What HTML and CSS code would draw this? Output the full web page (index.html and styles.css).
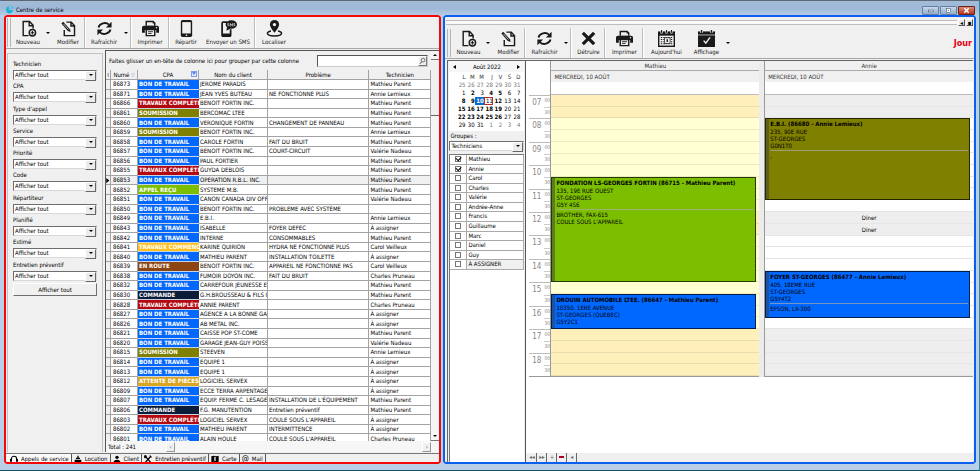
FILE: index.html
```html
<!DOCTYPE html>
<html lang="fr">
<head>
<meta charset="utf-8">
<title>Centre de service</title>
<link rel="stylesheet" href="styles.css">
</head>
<body>
<svg class="sprite" aria-hidden="true">
  <symbol id="i-new" viewBox="0 0 24 24"><path d="M12 22H4.500V2h9l5 5.500V12M13 2v6h5.500" fill="none" stroke="currentColor" stroke-width="2"/><circle cx="17.500" cy="18" r="4.500" fill="none" stroke="currentColor" stroke-width="2"/><path d="M17.500 15.500v5M15 18h5" stroke="currentColor" stroke-width="1.600"/></symbol>
  <symbol id="i-edit" viewBox="0 0 24 24"><path d="M9 3h7l4.500 5v14H6v-8M15.500 3v5.500h5" fill="none" stroke="currentColor" stroke-width="2"/><path d="M2 5l2.500-2.500L14 13l1 4-4-1.500z" fill="currentColor"/><path d="M5 5.500l7 8" stroke="#f0f0f0" stroke-width="1"/></symbol>
  <symbol id="i-refresh" viewBox="0 0 24 24"><path d="M3.500 10.500A9 8 0 0 1 18.500 6.500M20.500 13.500A9 8 0 0 1 5.500 17.500" fill="none" stroke="currentColor" stroke-width="2.600"/><path d="M22 2.500v8h-8zM2 21.500v-8h8z" fill="currentColor"/></symbol>
  <symbol id="i-print" viewBox="0 0 24 24"><path d="M5 1h11l3 3v4H5z" fill="currentColor"/><path d="M7 3h8v2h2v3H7z" fill="#f0f0f0"/><path d="M2.500 8h19Q24 8 24 10.500V18h-4v-4H4v4H0v-7.500Q0 8 2.500 8z" fill="currentColor"/><path d="M5 13h14v10H5z" fill="currentColor"/><path d="M7 14.500h10V21H7z" fill="#f0f0f0"/><path d="M8.500 16.500h7M8.500 19h5" stroke="currentColor" stroke-width="1.200"/><circle cx="20.500" cy="11" r="1" fill="#f0f0f0"/></symbol>
  <symbol id="i-phone" viewBox="0 0 24 24"><rect x="4" y="0" width="16" height="24" rx="2.500" fill="currentColor"/><rect x="6" y="3" width="12" height="16" fill="#f0f0f0"/><circle cx="12" cy="21.500" r="1.200" fill="#f0f0f0"/></symbol>
  <symbol id="i-sms" viewBox="0 0 24 24"><path d="M10 3H4.500Q3 3 3 4.500v17Q3 23 4.500 23h9q1.500 0 1.500-1.500V13" fill="none" stroke="currentColor" stroke-width="2.500"/><path d="M3 19h12v4H3z" fill="currentColor"/><ellipse cx="16" cy="6.500" rx="8" ry="6" fill="currentColor"/><path d="M10 9l-1 6 6-3z" fill="currentColor"/><path d="M12.500 5q-2-.5-2 .8t2 1.200-2 1.500M14.500 9V5l1.500 2.500L17.500 5v4M21 5q-2-.5-2 .8t2 1.200-2 1.500" fill="none" stroke="#f0f0f0" stroke-width=".9"/></symbol>
  <symbol id="i-pin" viewBox="0 0 24 24"><path d="M12 0a6.500 6.500 0 0 1 6.500 6.500C18.500 11 12 18 12 18S5.500 11 5.500 6.500A6.500 6.500 0 0 1 12 0z" fill="currentColor"/><circle cx="12" cy="6.500" r="2.300" fill="#f0f0f0"/><path d="M7 15.500c-3 .6-5 1.700-5 3.200C2 21 6.500 22.500 12 22.500S22 21 22 18.700c0-1.500-2-2.600-5-3.200" fill="none" stroke="currentColor" stroke-width="2"/></symbol>
  <symbol id="i-x" viewBox="0 0 24 24"><path d="M4 4l16 16M20 4L4 20" stroke="currentColor" stroke-width="4.500"/></symbol>
  <symbol id="i-cal" viewBox="0 0 24 24"><rect x="0" y="2" width="24" height="22" fill="currentColor"/><path d="M5 0v5M12 0v5M19 0v5" stroke="#f0f0f0" stroke-width="3"/><path d="M5 0v4M12 0v4M19 0v4" stroke="currentColor" stroke-width="1.500"/><rect x="2" y="8" width="20" height="14" fill="#f0f0f0"/><path d="M4 10.500h16M4 13.500h16M4 16.500h16M4 19.500h16" stroke="currentColor" stroke-width="1.500" stroke-dasharray="2 1.500"/><rect x="9" y="11" width="8" height="8" fill="#f0f0f0" stroke="currentColor"/><path d="M12 13h2v4h-2z" fill="currentColor"/></symbol>
  <symbol id="i-calcheck" viewBox="0 0 24 24"><rect x="0" y="2" width="24" height="22" fill="currentColor"/><path d="M5 0v4M19 0v4" stroke="#f0f0f0" stroke-width="4"/><path d="M5 0v4M19 0v4" stroke="currentColor" stroke-width="2"/><path d="M0 7h24" stroke="#f0f0f0" stroke-width="1"/><path d="M8 15l3 3.500 6-8" fill="none" stroke="#f0f0f0" stroke-width="2"/></symbol>
  <symbol id="i-head" viewBox="0 0 12 12"><path d="M2 9V6a4 4 0 0 1 8 0v3" fill="none" stroke="currentColor" stroke-width="1.600"/><path d="M0 6h3v4H0zM9 6h3v4H9z" fill="currentColor"/></symbol>
  <symbol id="i-loc" viewBox="0 0 12 12"><path d="M1 7h10v4H1zM3 4h6v2H3zM5 1h2v3H5z" fill="currentColor"/></symbol>
  <symbol id="i-user" viewBox="0 0 12 12"><circle cx="6" cy="3.500" r="2.500" fill="currentColor"/><path d="M1 11q0-4 5-4t5 4z" fill="currentColor"/></symbol>
  <symbol id="i-tools" viewBox="0 0 12 12"><path d="M2 2l8 9M10.500 1.500L2 11" stroke="currentColor" stroke-width="2"/><path d="M0 1.500l3-1 1 3-3 1zM8 0l4 4" stroke="currentColor" fill="currentColor"/></symbol>
  <symbol id="i-map" viewBox="0 0 12 12"><path d="M.5 2L4 1l4 1 3.500-1v9L8 11l-4-1-3.500 1z" fill="currentColor"/><path d="M5 2.500l2 .5v6l-2-.5z" fill="#f0f0f0"/></symbol>
  <symbol id="i-glass" viewBox="0 0 12 12"><circle cx="7" cy="4.500" r="3.200" fill="none" stroke="#444" stroke-width="1.200"/><path d="M5 7l-3.500 4" stroke="#444" stroke-width="1.500"/></symbol>
  <symbol id="i-cursor" viewBox="0 0 4 8"><path d="M0 1l3.500 3L0 7z" fill="#000"/></symbol>
</svg>

<header class="titlebar">
  <svg class="logo" viewBox="0 0 16 16"><path d="M7 2a6 6.500 0 1 0 7 7L7 9z" fill="#14b4d8"/><path d="M9 1h2v2H9zM12 3h3v3h-3zM9 5h2v2H9z" fill="#2cc6e4"/></svg>
  <h1>Centre de service</h1>
  <div class="winbtns">
    <button aria-label="Réduire"><svg viewBox="0 0 16 8"><rect x="5.500" y="3.500" width="6" height="2" fill="#fff" stroke="#455a78" stroke-width=".7"/></svg></button>
    <button aria-label="Restaurer"><svg viewBox="0 0 16 8"><rect x="5.500" y="1.500" width="5" height="5" fill="#fff" stroke="#455a78" stroke-width=".7"/><rect x="7.500" y="3.500" width="1" height="1" fill="#455a78"/></svg></button>
    <button class="close" aria-label="Fermer"><svg viewBox="0 0 16 8"><path d="M5.500 1.500l5 5M10.500 1.500l-5 5" stroke="#fff" stroke-width="1.600"/></svg></button>
  </div>
</header>

<main>
  <section class="pane calls">
    <nav class="toolbar">
      <span class="grip"></span>
      <button class="tool w32"><svg><use href="#i-new"/></svg>Nouveau</button><button class="drop" aria-label="Options de Nouveau"></button>
      <button class="tool w32"><svg><use href="#i-edit"/></svg>Modifier</button><span class="sep"></span>
      <button class="tool w36"><svg><use href="#i-refresh"/></svg>Rafraîchir</button><button class="drop" aria-label="Options de Rafraîchir"></button><span class="sep"></span>
      <button class="tool w36"><svg><use href="#i-print"/></svg>Imprimer</button><span class="sep"></span>
      <button class="tool w32"><svg><use href="#i-phone"/></svg>Répartir</button>
      <button class="tool w52"><svg><use href="#i-sms"/></svg>Envoyer un SMS</button><span class="sep"></span>
      <button class="tool w36"><svg><use href="#i-pin"/></svg>Localiser</button>
    </nav>
    <div class="callbody">
      <form class="filters">
        <div class="fields" id="fields"></div>
        <button type="button" class="all">Afficher tout</button>
      </form>
      <div class="gridbox">
        <div class="gridmain">
          <div class="groupbar"><span>Faites glisser un en-tête de colonne ici pour grouper par cette colonne</span>
            <div class="search"><input type="text" aria-label="Rechercher"><button aria-label="Lancer la recherche"><svg><use href="#i-glass"/></svg></button></div>
          </div>
          <div class="tablewrap">
            <table>
              <colgroup><col class="c0"><col class="c1"><col class="c2"><col class="c3"><col class="c4"><col class="c5"></colgroup>
              <thead><tr><th class="ind">⁞</th><th>Numé <i class="sort">▽</i></th><th>CPA<i class="filt"></i></th><th>Nom du client</th><th>Problème</th><th>Technicien</th></tr></thead>
              <tbody id="rows"></tbody>
            </table>
          </div>
          <div class="total"><span>Total : 241</span><button aria-label="Défiler à gauche">‹</button><button aria-label="Défiler à droite">›</button></div>
        </div>
        <div class="vscroll"><button class="up" aria-label="Monter"></button><span></span><button class="down" aria-label="Descendre"></button></div>
      </div>
    </div>
    <nav class="tabs">
      <button class="on"><svg><use href="#i-head"/></svg>Appels de service</button>
      <button><svg><use href="#i-loc"/></svg>Location</button>
      <button><svg><use href="#i-user"/></svg>Client</button>
      <button><svg><use href="#i-tools"/></svg>Entretien préventif</button>
      <button><svg><use href="#i-map"/></svg>Carte</button>
      <button><b>@</b>Mail</button>
    </nav>
  </section>

  <section class="pane agenda">
    <div class="dock"><span></span><button aria-label="Réduire le volet">◂</button><button aria-label="Fermer le volet">▪</button></div>
    <nav class="toolbar">
      <span class="grip"></span>
      <button class="tool w32"><svg><use href="#i-new"/></svg>Nouveau</button><button class="drop" aria-label="Options de Nouveau"></button>
      <button class="tool w32"><svg><use href="#i-edit"/></svg>Modifier</button><span class="sep"></span>
      <button class="tool w36"><svg><use href="#i-refresh"/></svg>Rafraîchir</button><button class="drop" aria-label="Options de Rafraîchir"></button><span class="sep"></span>
      <button class="tool w32"><svg><use href="#i-x"/></svg>Détruire</button><span class="sep"></span>
      <button class="tool w36"><svg><use href="#i-print"/></svg>Imprimer</button><span class="sep"></span>
      <button class="tool w44"><svg><use href="#i-cal"/></svg>Aujourd'hui</button>
      <button class="tool w36"><svg><use href="#i-calcheck"/></svg>Affichage</button><button class="drop" aria-label="Options d'affichage"></button>
      <strong class="mode">Jour</strong>
    </nav>
    <div class="agendabody">
      <aside>
        <div class="monthnav"><button aria-label="Mois précédent" class="prev"></button><span>Août 2022</span><button aria-label="Mois suivant" class="next"></button></div>
        <table class="month" id="month"></table>
        <label class="grouplabel" for="groupe">Groupes :</label>
        <div class="combo"><select id="groupe"><option>Techniciens</option></select></div>
        <div class="people" id="people"></div>
      </aside>
      <div class="planner">
        <div class="sheet">
          <div class="hours">
            <div class="corner"></div>
            <div class="hourlist" id="hours"></div>
          </div>
          <div class="daycol mathieu">
            <h2>Mathieu</h2><h3>MERCREDI, 10 AOÛT</h3><div class="allday"></div>
            <div class="slots">
              <article class="event green" style="grid-row:8/17"><h4>FONDATION LS-GEORGES FORTIN (86715 - Mathieu Parent)</h4><p>135, 19E RUE OUEST<br>ST-GEORGES<br>G5Y 4S6</p><p class="note">BROTHER, FAX-615<br>COULE SOUS L'APPAREIL</p></article>
              <article class="event blue" style="grid-row:18/21"><h4>DROUIN AUTOMOBILE LTEE. (86647 - Mathieu Parent)</h4><p>10350, 1ERE AVENUE<br>ST-GEORGES (QUEBEC)<br>G5Y2C1</p></article>
            </div>
          </div>
          <div class="daycol annie">
            <h2>Annie</h2><h3>MERCREDI, 10 AOÛT</h3><div class="allday"></div>
            <div class="slots">
              <article class="event olive" style="grid-row:3/10"><h4>E.B.I. (86680 - Annie Lemieux)</h4><p>235, 90E RUE<br>ST-GEORGES<br>G0N1T0</p><p class="note">,</p></article>
              <article class="event blue" style="grid-row:16/20"><h4>FOYER ST-GEORGES (86477 - Annie Lemieux)</h4><p>405, 18EME RUE<br>ST-GEORGES<br>G5Y4T2</p><p class="note">EPSON, LX-300</p></article>
            </div>
          </div>
        </div>
        <div class="pager"><button aria-label="Premier">◂◂</button><button aria-label="Dernier">▸▸</button><button aria-label="Ajouter">+</button><button aria-label="Retirer" class="minus"></button><button aria-label="Précédent">◂</button></div>
      </div>
    </div>
  </section>
</main>
<script src="app.js"></script>
</body>
</html>
```
FILE: styles.css
```css
* { box-sizing: border-box; }
html, body { height: 100%; }
body { margin: 0; display: flex; flex-direction: column; overflow: hidden; background: #b9cfe8; border-top: 1px solid #5c6a78; border-bottom: 1px solid #0b5560; border-right: 1px solid #2a8a9c; font: 6px/8px "DejaVu Sans Condensed", "DejaVu Sans", sans-serif; color: #000; }
button, input, select { font: inherit; color: inherit; }
button { margin: 0; padding: 0; border: 0; background: none; display: block; }
h1, h2, h3, h4, p { margin: 0; font: inherit; }
.sprite { position: absolute; width: 0; height: 0; }

.titlebar { flex: none; height: 14px; display: flex; align-items: center; padding: 3px 4px 0 5px; background: linear-gradient(#a3bbd6, #9db8d8 50%, #b5cbe4); }
.logo { width: 9px; height: 9px; margin-right: 2px; }
.winbtns { margin-left: auto; display: flex; gap: 1px; align-self: flex-end; }
.winbtns button { width: 17px; height: 9px; border: 1px solid #66809f; border-radius: 1px; background: linear-gradient(#c6d7ea, #93aecb); }
.winbtns .close { background: linear-gradient(#d98a78, #b8341c); border-color: #6a2418; }
.winbtns svg { display: block; width: 15px; height: 7px; }

main { flex: 1; min-height: 0; display: flex; gap: 2px; padding: 0 3px 6px 4px; }
.pane { position: relative; display: flex; flex-direction: column; min-width: 0; background: #f0f0f0; border-radius: 3px; overflow: hidden; padding: 2px 2px 0; }
.pane::after { content: ""; position: absolute; inset: 0; z-index: 2; border: 2px solid #f20808; border-radius: 3px; pointer-events: none; }
.calls { flex: 437 1 0; }
.agenda { flex: 533 1 0; padding-bottom: 1px; }
.agenda::after { border-color: #0a5ff0; }

.toolbar { flex: none; height: 32px; display: flex; align-items: stretch; border-bottom: 1px solid #a6a6a6; }
.grip { width: 4px; margin: 1px 1px; border: solid #b4b4b4; border-width: 0 1px; }
.agenda .grip { margin-left: 2px; }
.tool { display: flex; flex-direction: column; align-items: center; padding-top: 3px; gap: 1px; white-space: nowrap; color: #1a1a1a; }
.tool svg { width: 17px; height: 17px; }
.w32 { width: 32px; } .w36 { width: 36px; } .w44 { width: 44px; } .w52 { width: 52px; }
.sep { width: 2px; border-left: 1px solid #bcbcbc; background: #fff; }
.drop { width: 8px; display: flex; align-items: center; justify-content: center; }
.drop::before, .combo::after, .vscroll button::before { content: ""; border: solid transparent; border-width: 2px 2px 0; border-top-color: #000; }

.callbody { flex: 1; min-height: 0; display: flex; padding-top: 1px; }
.filters { flex: none; width: 96px; margin: 3px 2px 0 1px; border: solid #c2c2c2; border-width: 1px 1px 0 1px; padding: 4px 5px 0; }
.fields { display: grid; grid-auto-rows: 1fr; height: 223px; }
.fields label { display: block; height: 12px; padding-top: 2px; }
.combo { flex: none; position: relative; height: 10px; background: #fff; border: 1px solid; border-color: #6e6e6e #d8d8d8 #d8d8d8 #6e6e6e; }
.combo select { display: block; width: 100%; height: 8px; padding: 0 0 0 1px; border: 0; background: none; appearance: none; line-height: 8px; outline: 0; }
.combo::before { content: ""; position: absolute; top: 0; right: 0; width: 9px; height: 8px; background: #ececec; border: 1px solid; border-color: #fff #666 #666 #fff; }
.combo::after { position: absolute; top: 3px; right: 3px; }
.all { width: 84px; height: 13px; margin-top: 2px; border: 1px solid; border-color: #fff #6e6e6e #6e6e6e #fff; }

.gridbox { flex: 1; min-width: 0; display: flex; border: solid #555; border-width: 1px 0 0 1px; }
.gridmain { flex: 1; min-width: 0; display: flex; flex-direction: column; }
.groupbar { flex: none; height: 19px; display: flex; align-items: center; padding: 0 3px; white-space: nowrap; }
.search { width: 111px; height: 12px; margin-left: auto; display: flex; background: #fff; border: 1px solid; border-color: #555 #ccc #ccc #555; }
.search input { flex: 1; min-width: 0; border: 0; padding: 0; background: none; outline: 0; }
.search button { width: 9px; background: #eee; border: 1px solid; border-color: #fff #777 #777 #fff; }
.search svg { display: block; width: 7px; height: 8px; }
.tablewrap { flex: 1; min-height: 0; overflow: hidden; }
.tablewrap table { width: 100%; height: calc(100% + 3px); table-layout: fixed; border-collapse: separate; border-spacing: 0; background: #fff; }
.c0 { width: 5px; } .c1 { width: 27px; } .c2 { width: 61px; } .c3 { width: 69px; } .c5 { width: 62px; }
.tablewrap td, .tablewrap th { padding: 0 0 0 2px; border: solid #a2a2a2; border-width: 0 1px 1px 0; white-space: nowrap; overflow: hidden; line-height: 8px; }
.tablewrap th { position: relative; font-weight: normal; background: #f0f0f0; text-align: center; padding: 0; height: 10px; }
.tablewrap td:nth-child(n+4) { padding-left: 1px; }
.tablewrap td:first-child { padding: 0; background: #f0f0f0; }
.tablewrap td svg { display: block; width: 4px; height: 7px; }
.sort { font-style: normal; font-size: 5px; color: #888; }
.filt { position: absolute; right: 1px; top: 1px; width: 6px; height: 6px; border: 1px solid #7e9cf0; background: #dfe7ff; }
.filt::before { content: ""; display: block; border: solid transparent; border-width: 3px 2px 0; border-top-color: #5b82f0; }
.tablewrap .cpa { color: #fff; font-weight: bold; border-right: 0; padding-left: 1px; border-bottom-color: #c8d4e4; }
.bt { background: #0068ff; } .tc { background: #b40810; } .so { background: #808000; } .ar { background: #7cbe00; }
.tm { background: #ffc020; } .er { background: #8b4513; } .co { background: #0a1c38; } .ap { background: #daa520; }
.cur td:nth-child(n+4), .cur td:nth-child(2) { background: #f0f0f0; }
.total { flex: none; height: 11px; display: flex; align-items: center; padding-left: 2px; background: #f6f6f6; }
.total span { width: 58px; }
.total button { width: 9px; height: 10px; color: #444; background: #f0f0f0; border: 1px solid; border-color: #fff #999 #999 #fff; line-height: 6px; }
.total button:last-child { margin-left: auto; }
.vscroll { flex: none; width: 8px; display: flex; flex-direction: column; background: #f6f6f6; padding-bottom: 11px; }
.vscroll button { height: 9px; display: flex; align-items: center; justify-content: center; border-bottom: 1px solid #777; }
.vscroll .up::before { transform: rotate(180deg); }
.vscroll .down { margin-top: auto; }
.vscroll span { height: 56px; border-bottom: 1px solid #666; background: #f0f0f0; }

.tabs { flex: none; height: 11px; display: flex; border-top: 1px solid #777; margin-top: 1px; }
.tabs button { display: flex; align-items: center; gap: 3px; padding: 0 2px; border-right: 1px solid #555; white-space: nowrap; }
.tabs button:first-child { padding-left: 4px; }
.tabs svg { width: 8px; height: 8px; }
.tabs b { font-size: 8px; font-weight: normal; }
.tabs .on { background: #fafafa; }

.dock { flex: none; height: 11px; display: flex; align-items: center; gap: 1px; padding: 0 1px; }
.dock span { flex: 1; height: 5px; border: solid #bdbdbd; border-width: 1px 0; background: #fafafa; }
.dock button { width: 7px; height: 7px; background: #e6e6e6; border: 1px solid; border-color: #fff #555 #555 #fff; line-height: 5px; }
.mode { margin-left: auto; align-self: center; padding-right: 2px; color: #e80010; font-size: 9px; }
.agenda .toolbar { height: 31px; }
.agenda .tool { padding-top: 2px; }
.agendabody { flex: 1; min-height: 0; display: flex; margin: 1px 1px 0 2px; border: solid #666; border-width: 1px 0 0 1px; }
aside { flex: none; width: 76px; display: flex; flex-direction: column; padding-left: 1px; background: #f0f0f0; }
.monthnav { flex: none; height: 11px; display: flex; align-items: center; justify-content: space-between; padding: 1px 4px 0; background: #f6f6f6; }
.prev, .next { width: 3px; height: 4px; border: solid transparent; border-width: 2px 3px 2px 0; border-right-color: #000; }
.next { border-width: 2px 0 2px 3px; border-left-color: #000; }
.month { width: 100%; table-layout: fixed; border-spacing: 0; background: #fff; padding: 0 4px 2px 7px; }
.month td, .month th { padding: 0; height: 8px; line-height: 8px; text-align: right; font-weight: normal; }
.month th { height: 9px; color: #333; }
.month .out { color: #777; } .month .b { font-weight: bold; }
.month .sel { background: #0a6ad0; color: #fff; } .month .today { outline: 1px solid #b03030; outline-offset: -1px; }
.grouplabel { height: 10px; padding: 1px 0 0 1px; }
.people { flex: 1; margin-top: 3px; background: #fff; border: 1px solid #777; border-width: 1px 0 0 1px; display: flex; flex-direction: column; }
.peoplelist { height: 115px; display: grid; grid-auto-rows: 1fr; }
.peoplelist label { min-height: 0; display: grid; grid-template: 1fr / 16px 1fr; border-bottom: 1px solid #aaa; line-height: 8px; }
.peoplelist label:last-child span { background: #f0f0f0; }
.peoplelist span { border: solid #aaa; border-width: 0 1px; padding-left: 1px; }
.peoplelist input { appearance: none; width: 6px; height: 6px; margin: 1px auto; border: 1px solid #777; background: #fff; position: relative; }
.peoplelist input:checked::after { content: ""; position: absolute; left: 0; top: -1px; width: 4px; height: 3px; border: solid #000; border-width: 0 0 1px 1px; transform: rotate(-45deg); }

.planner { flex: 1; min-width: 0; display: flex; flex-direction: column; background: #fff; border-left: 1px solid #555; margin-left: 1px; }
.sheet { flex: 1; display: flex; align-items: flex-start; }
.hours { width: 24px; }
.corner { height: 34px; }
.hourlist { height: 282px; display: grid; grid-auto-rows: 1fr; margin-left: 3px; border-bottom: 1px solid #999; }
.hourlist div { display: grid; grid-template-columns: 12px 1fr; grid-template-rows: 1fr 1fr; border-top: 1px solid #bbb; color: #888; text-align: right; }
.hourlist b { grid-row: 1/3; font-weight: normal; font-size: 8px; line-height: 13px; }
.hourlist i { font-style: normal; font-size: 5px; line-height: 8px; padding-right: 1px; }
.hourlist i:last-child { border-top: 1px solid #ccc; margin-left: 3px; }
.daycol { flex: 1; min-width: 0; border-left: 1px solid #999; }
.mathieu { border-right: 5px solid #ececec; }
.daycol h2 { height: 10px; line-height: 9px; text-align: center; background: #f0f0f0; border-bottom: 1px solid #aaa; color: #333; }
.daycol h3 { height: 11px; line-height: 11px; padding-left: 3px; background: #f0f0f0; color: #333; }
.allday { height: 13px; border-bottom: 1px solid #bbb; }
.slots { height: 282px; display: grid; grid-template: repeat(24, 1fr) / 1fr; border-bottom: 1px solid #999; }
.slot { grid-column: 1; border-bottom: 1px solid #e4e4e4; text-align: center; line-height: 11px; }
.mathieu .slot { background: #ffffd2; border-color: #ecebc0; }
.mathieu .off { background: #fff0bb; border-color: #e9dcae; }
.annie .off { background: #eee; border-color: #e6e6e6; }
.event { grid-column: 1; z-index: 1; min-height: 0; overflow: hidden; margin-right: 3px; border: 1px solid rgba(0, 0, 0, .7); box-shadow: inset 3px 0 rgba(60, 60, 60, .5); padding: 1px 1px 0 4px; line-height: 7px; white-space: nowrap; }
.event h4 { font-weight: bold; line-height: 8px; }
.note { border-top: 1px solid rgba(170, 170, 170, .7); padding-top: 1px; margin-top: 1px; }
.green { background: #7cbe00; } .blue { background: #0068ff; } .olive { background: #808000; }
.pager { flex: none; height: 10px; display: flex; background: #efefef; padding-left: 1px; }
.pager button { width: 10px; border-right: 1px solid #666; color: #666; line-height: 8px; padding-bottom: 2px; }
.minus::before { content: ""; display: block; height: 2px; margin: 0 2px; background: #b00020; }
```
FILE: app.js
```js
const fill = (id, html) => { document.getElementById(id).innerHTML = html; };

const filters = ['Technicien', 'CPA', "Type d'appel", 'Service', 'Priorité', 'Code', 'Répartiteur', 'Planifié', 'Estimé', 'Entretien préventif'];
fill('fields', filters.map((f, i) => `<div><label for="f${i}">${f}</label><div class="combo"><select id="f${i}"><option>Afficher tout</option></select></div></div>`).join(''));

const states = { bt: 'BON DE TRAVAIL', tc: 'TRAVAUX COMPLÉTI', so: 'SOUMISSION', ar: 'APPEL REÇU', tm: 'TRAVAUX COMMENC', er: 'EN ROUTE', co: 'COMMANDE', ap: 'ATTENTE DE PIÈCES' };
const M = 'Mathieu Parent', A = 'Annie Lemieux', V = 'Valérie Nadeau', C = 'Carol Veilleux', P = 'Charles Pruneau', N = 'À assigner';
const calls = [
  [86873, 'bt', 'JEROME PARADIS', '', M],
  [86871, 'bt', 'JEAN YVES BUTEAU', 'NE FONCTIONNE PLUS', A],
  [86866, 'tc', 'BENOIT FORTIN INC.', '', M],
  [86861, 'so', 'BERCOMAC LTEE', '', M],
  [86860, 'bt', 'VERONIQUE FORTIN', 'CHANGEMENT DE PANNEAU', M],
  [86859, 'so', 'BENOIT FORTIN INC.', '', A],
  [86858, 'bt', 'CAROLE FORTIN', 'FAIT DU BRUIT', M],
  [86857, 'bt', 'BENOIT FORTIN INC.', 'COURT-CIRCUIT', V],
  [86856, 'bt', 'PAUL FORTIER', '', M],
  [86855, 'tc', 'GUYDA DEBLOIS', '', M],
  [86853, 'bt', 'OPERATION R.B.L. INC.', '', M],
  [86852, 'ar', 'SYSTEME M.B.', '', M],
  [86851, 'bt', 'CANON CANADA  DIV OFF', '', V],
  [86850, 'bt', 'BENOIT FORTIN INC.', 'PROBLEME AVEC SYSTÈME', ''],
  [86849, 'bt', 'E.B.I.', '', A],
  [86843, 'bt', 'ISABELLE', 'FOYER DEFEC', N],
  [86842, 'bt', 'INTERNE', 'CONSOMMABLES', M],
  [86841, 'tm', 'KARINE QUIRION', 'HYDRA NE FONCTIONNE PLUS', C],
  [86840, 'bt', 'MATHIEU PARENT', 'INSTALLATION TOILETTE', N],
  [86839, 'er', 'BENOIT FORTIN INC.', 'APPAREIL NE FONCTIONNE PAS', C],
  [86838, 'bt', 'FUMOIR DOYON INC.', 'FAIT DU BRUIT', P],
  [86832, 'bt', 'CARREFOUR JEUNESSE E', '', M],
  [86830, 'co', 'G.H.BROUSSEAU &amp; FILS I', '', M],
  [86828, 'tc', 'ANNIE PARENT', '', P],
  [86827, 'bt', 'AGENCE A LA BONNE GAR', '', N],
  [86826, 'bt', 'AB METAL INC.', '', N],
  [86821, 'bt', 'CAISSE POP ST-COME', '', M],
  [86820, 'bt', 'GARAGE JEAN-GUY POISS', '', V],
  [86815, 'so', 'STEEVEN', '', A],
  [86814, 'bt', 'EQUIPE 1', '', N],
  [86813, 'bt', 'EQUIPE 1', '', N],
  [86812, 'ap', 'LOGICIEL SERVEX', '', N],
  [86809, 'bt', 'ECCE TERRA ARPENTAGE', '', N],
  [86807, 'bt', 'EQUIP. FERME C. LESAGE', "INSTALLATION DE L'ÉQUIPEMENT", M],
  [86806, 'co', 'F.G. MANUTENTION', 'Entretien préventif', M],
  [86803, 'tc', 'LOGICIEL SERVEX', "COULE SOUS L'APPAREIL", N],
  [86802, 'bt', 'MATHIEU PARENT', 'INTERMITTENCE', N],
  [86801, 'bt', 'ALAIN HOULE', "COULE SOUS L'APPAREIL", P]
];
fill('rows', calls.map(([n, s, c, p, t]) => {
  const cur = n === 86853;
  return `<tr${cur ? ' class="cur"' : ''}><td>${cur ? '<svg><use href="#i-cursor"/></svg>' : ''}</td><td>${n}</td><td class="cpa ${s}">${states[s]}</td><td>${c}</td><td>${p}</td><td>${t}</td></tr>`;
}).join(''));

const bold = [2, 4, 5, 8, 9, 12, 15, 16, 17, 18, 19, 22, 23, 24, 25, 26];
let month = '<tr>' + [...'LMMJVSD'].map(d => `<th>${d}</th>`).join('') + '</tr>';
for (let w = 0; w < 6; w++) {
  month += '<tr>';
  for (let d = 0; d < 7; d++) {
    const k = w * 7 + d - 6;
    const n = k < 1 ? k + 31 : k > 31 ? k - 31 : k;
    const cls = n !== k ? 'out' : k === 10 ? 'sel b' : k === 11 ? 'today' : bold.includes(k) ? 'b' : '';
    month += `<td class="${cls}">${n}</td>`;
  }
  month += '</tr>';
}
fill('month', month);

const people = ['Mathieu', 'Annie', 'Carol', 'Charles', 'Valérie', 'Andrée-Anne', 'Francis', 'Guillaume', 'Marc', 'Daniel', 'Guy', 'À ASSIGNER'];
fill('people', '<div class="peoplelist">' + people.map((p, i) => `<label><input type="checkbox"${i < 2 ? ' checked' : ''}><span>${p}</span></label>`).join('') + '</div>');

let hours = '';
for (let h = 7; h < 19; h++) hours += `<div><b>${String(h).padStart(2, '0')}</b><i>00</i><i>30</i></div>`;
fill('hours', hours);

document.querySelectorAll('.slots').forEach((col, c) => {
  for (let i = 0; i < 24; i++) {
    const s = document.createElement('div');
    const lunch = i === 10 || i === 11;
    s.className = 'slot' + (i < 2 || i > 19 || lunch ? ' off' : '');
    s.style.gridRow = i + 1;
    if (c === 1 && lunch) s.textContent = 'Diner';
    col.append(s);
  }
});
```
